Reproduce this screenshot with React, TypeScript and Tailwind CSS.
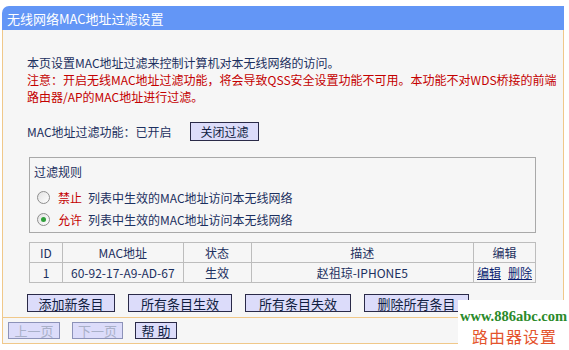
import React from "react";

const font = { fontFamily: '"Noto Sans CJK SC", "Noto Sans", sans-serif' };

type BtnProps = { label: string; w: string; disabled?: boolean };

const Btn = (props: BtnProps) => (
    <div
        className={`flex items-center justify-center border bg-[#dcdcfa] ${props.w} ${props.disabled ? "border-[#8c92b8] text-[#a9b0c8]" : "border-[#2a2a48] text-[#101c40]"}`}
    >
        {props.label}
    </div>
);

const Radio = ({ checked }: { checked?: boolean }) => (
    <span className="w-[13px] h-[13px] rounded-full border border-[#8e8e8e] bg-gradient-to-br from-[#e2e2e2] to-white flex items-center justify-center">
        {checked && <span className="w-[5px] h-[5px] rounded-full bg-[#2f9f3a]" />}
    </span>
);

export default function App() {
    return (
        <div className="w-[569px] h-[350px] bg-white relative overflow-hidden text-[12px] leading-[17px]" style={font}>
            <div className="pt-[6px] pl-[2px] w-[564px]">
                {/* title bar */}
                <div className="h-[24px] bg-[#6396f6] rounded-tl-[7px] text-white text-[13px] flex items-center pl-[5px]">
                    无线网络MAC地址过滤设置
                </div>

                <div className="border-x border-b border-[#f0c88a] bg-[#f6f6f6] h-[314px] flex flex-col">
                    <div className="pl-[24px] pt-[24px] text-[#1c3060]">
                        <div>本页设置MAC地址过滤来控制计算机对本无线网络的访问。</div>
                        <div className="text-[#c40000]">注意：开启无线MAC地址过滤功能，将会导致QSS安全设置功能不可用。本功能不对WDS桥接的前端</div>
                        <div className="text-[#c40000]">路由器/AP的MAC地址进行过滤。</div>

                        <div className="flex items-center mt-[17px] h-[19px]">
                            <span className="w-[163px]">MAC地址过滤功能：已开启</span>
                            <Btn label="关闭过滤" w="w-[69px] h-[19px]" />
                        </div>

                        {/* rules box */}
                        <div className="ml-[2px] mt-[16px] w-[507px] h-[76px] border border-[#a9a9a9] pl-[4px] pt-[5px]">
                            <div>过滤规则</div>
                            <div className="flex items-center mt-[9px] h-[17px]">
                                <span className="ml-[3px]"><Radio /></span>
                                <span className="ml-[8px] text-[#c40000]">禁止</span>
                                <span className="ml-[6px]">列表中生效的MAC地址访问本无线网络</span>
                            </div>
                            <div className="flex items-center mt-[5px] h-[17px]">
                                <span className="ml-[3px]"><Radio checked /></span>
                                <span className="ml-[8px] text-[#c40000]">允许</span>
                                <span className="ml-[6px]">列表中生效的MAC地址访问本无线网络</span>
                            </div>
                        </div>

                        {/* table */}
                        <table className="ml-[2px] mt-[9px] w-[507px] border-collapse text-center">
                            <tbody>
                                <tr className="h-[20px]">
                                    <td className="w-[33px] border border-[#bdbdbd]">ID</td>
                                    <td className="w-[121px] border border-[#bdbdbd]">MAC地址</td>
                                    <td className="w-[68px] border border-[#bdbdbd]">状态</td>
                                    <td className="w-[223px] border border-[#bdbdbd]">描述</td>
                                    <td className="w-[62px] border border-[#bdbdbd]">编辑</td>
                                </tr>
                                <tr className="h-[20px]">
                                    <td className="border border-[#bdbdbd]">1</td>
                                    <td className="border border-[#bdbdbd]">60-92-17-A9-AD-67</td>
                                    <td className="border border-[#bdbdbd]">生效</td>
                                    <td className="border border-[#bdbdbd]">赵祖琼-IPHONE5</td>
                                    <td className="border border-[#bdbdbd]">
                                        <span className="underline text-[#0a1e70]">编辑</span>
                                        <span className="underline text-[#0a1e70] ml-[7px]">删除</span>
                                    </td>
                                </tr>
                            </tbody>
                        </table>

                        <div className="flex gap-[13px] mt-[11px] text-[13px]">
                            <Btn label="添加新条目" w="w-[88px] h-[18px]" />
                            <Btn label="所有条目生效" w="w-[104px] h-[18px]" />
                            <Btn label="所有条目失效" w="w-[106px] h-[18px]" />
                            <Btn label="删除所有条目" w="w-[105px] h-[18px]" />
                        </div>
                    </div>

                    <div className="mt-[5px] border-t border-[#f0c88a] pt-[4px] pl-[5px] flex gap-[12px] text-[13px]">
                        <Btn label="上一页" w="w-[52px] h-[17px]" disabled />
                        <Btn label="下一页" w="w-[51px] h-[17px]" disabled />
                        <Btn label="帮 助" w="w-[42px] h-[17px]" />
                    </div>
                </div>
            </div>

            {/* watermark */}
            <div className="absolute left-[458px] top-[300px] w-[111px] h-[50px] bg-white pl-[2px] pt-[8px]">
                <div className="text-[14.5px] leading-[16px] font-bold text-[#2a8a2a]" style={{ fontFamily: '"Liberation Serif", serif' }}>
                    www.886abc.com
                </div>
                <div className="mt-[3px] pl-[12px] text-[16px] leading-[18px] tracking-[1px] text-[#e4542c]">路由器设置</div>
            </div>
        </div>
    );
}
